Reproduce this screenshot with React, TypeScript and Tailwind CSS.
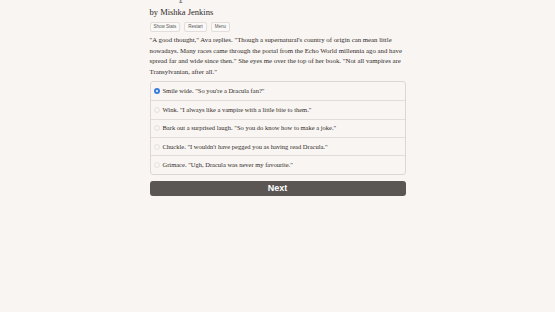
import { useState } from 'react';

const options = [
  'Smile wide. "So you\'re a Dracula fan?"',
  'Wink. "I always like a vampire with a little bite to them."',
  'Bark out a surprised laugh. "So you do know how to make a joke."',
  'Chuckle. "I wouldn\'t have pegged you as having read Dracula."',
  'Grimace. "Ugh, Dracula was never my favourite."',
];

export default function App() {
  const [selected, setSelected] = useState(0);

  return (
    <div className="min-h-[312px] w-full overflow-hidden bg-[#f9f5f2] text-[#3b3735]" style={{ fontFamily: '"Liberation Serif", serif' }}>
      <div className="mx-auto w-[256px]">
        <h1 className="-mt-[15px] text-[16px] leading-[18px] text-[#8a8582]">Vampires: The Bite of Dracula</h1>
        <p className="mt-[4px] text-[8.5px] leading-[10px] text-[#2f2b29]">by Mishka Jenkins</p>
        <div className="mt-[5px] flex gap-[4px]" style={{ fontFamily: '"Liberation Sans", sans-serif' }}>
          {['Show Stats', 'Restart', 'Menu'].map((b) => (
            <button key={b} className="rounded-[2px] border border-[#e3dedb] bg-[#fbf9f7] px-[3px] py-[1px] text-[4.5px] leading-[6px] text-[#555]">
              {b}
            </button>
          ))}
        </div>
        <p className="mt-[3px] text-[6.8px] leading-[10.7px] text-[#2f2b29]">
          "A good thought," Ava replies. "Though a supernatural's country of origin can mean little nowadays. Many races came through the portal from the Echo World millennia ago and have spread far and wide since then." She eyes me over the top of her book. "Not all vampires are Transylvanian, after all."
        </p>
        <div className="mt-[3px] overflow-hidden rounded-[3px] border border-[#dcd7d3]">
          {options.map((o, i) => (
            <label
              key={o}
              onClick={() => setSelected(i)}
              className={`flex h-[18.4px] items-center gap-[3px] pl-[3px] text-[6.5px] text-[#2f2b29] ${i > 0 ? 'border-t border-[#e3dedb]' : ''}`}
            >
              <span
                className={`flex h-[6px] w-[6px] items-center justify-center rounded-full ${i === selected ? 'bg-[#3b7ddd]' : 'border border-[#e6e2df] bg-[#f9f5f2]'}`}
              >
                {i === selected && <span className="h-[2px] w-[2px] rounded-full bg-white" />}
              </span>
              {o}
            </label>
          ))}
        </div>
        <button
          className="mt-[6px] flex h-[15px] w-full items-center justify-center rounded-[3px] bg-[#5b5654] text-[9px] font-bold text-white"
          style={{ fontFamily: '"Liberation Sans", sans-serif' }}
        >
          Next
        </button>
      </div>
    </div>
  );
}
